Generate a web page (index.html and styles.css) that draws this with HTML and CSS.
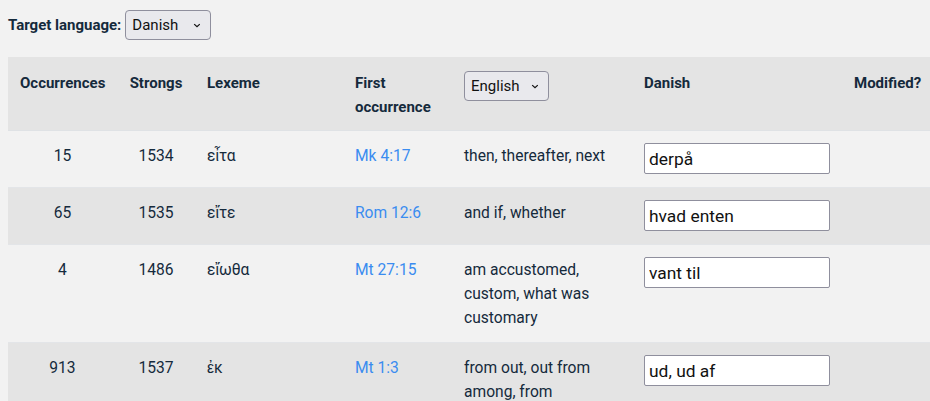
FILE: index.html
```html
<!DOCTYPE html>
<html lang="en">
<head>
<meta charset="utf-8">
<title>Lexeme translations</title>
<link rel="stylesheet" href="styles.css">
</head>
<body>
<div class="lang-bar">
  <label class="lang-label" for="target">Target language:</label>
  <select id="target" class="picker picker-target"><option>Danish</option></select>
</div>
<div class="table-wrap">
<table class="lex-table">
  <colgroup>
    <col class="c-occ"><col class="c-str"><col class="c-lex"><col class="c-first"><col class="c-gloss"><col class="c-tr"><col class="c-mod">
  </colgroup>
  <thead>
    <tr>
      <th class="num">Occurrences</th>
      <th class="num">Strongs</th>
      <th>Lexeme</th>
      <th>First occurrence</th>
      <th><select class="picker picker-src"><option>English</option></select></th>
      <th>Danish</th>
      <th>Modified?</th>
    </tr>
  </thead>
  <tbody>
    <tr>
      <td class="num">15</td><td class="num">1534</td><td>εἶτα</td>
      <td><a href="#">Mk 4:17</a></td><td>then, thereafter, next</td>
      <td><input class="tr-input" type="text" value="derpå"></td><td></td>
    </tr>
    <tr class="alt">
      <td class="num">65</td><td class="num">1535</td><td>εἴτε</td>
      <td><a href="#">Rom 12:6</a></td><td>and if, whether</td>
      <td><input class="tr-input" type="text" value="hvad enten"></td><td></td>
    </tr>
    <tr>
      <td class="num">4</td><td class="num">1486</td><td>εἴωθα</td>
      <td><a href="#">Mt 27:15</a></td><td>am accustomed, custom, what was customary</td>
      <td><input class="tr-input" type="text" value="vant til"></td><td></td>
    </tr>
    <tr class="alt">
      <td class="num">913</td><td class="num">1537</td><td>ἐκ</td>
      <td><a href="#">Mt 1:3</a></td><td>from out, out from among, from</td>
      <td><input class="tr-input" type="text" value="ud, ud af"></td><td></td>
    </tr>
  </tbody>
</table>
</div>
</body>
</html>
```
FILE: styles.css
```css
html {
  background: #f2f2f2;
  overflow: hidden;
}
body {
  margin: 8px 0 8px 8px;
  font-family: Roboto, "Liberation Sans", sans-serif;
  font-size: 15.6px;
  line-height: 24px;
  color: #152a3c;
}
.lang-bar {
  display: flex;
  align-items: center;
  gap: 4px;
  height: 34px;
}
.lang-label {
  font-weight: bold;
  font-size: 15px;
}
.picker {
  -webkit-appearance: none;
  appearance: none;
  height: 30px;
  box-sizing: border-box;
  border: 1px solid #8f8f9d;
  border-radius: 4px;
  background-color: #e9e9ed;
  background-image: url("data:image/svg+xml,%3Csvg xmlns='http://www.w3.org/2000/svg' width='10' height='6' viewBox='0 0 10 6'%3E%3Cpath d='M1.5 1.2 L5 4.6 L8.5 1.2' fill='none' stroke='%23111' stroke-width='1.5'/%3E%3C/svg%3E");
  background-repeat: no-repeat;
  background-position: right 9px center;
  background-size: 8px 5px;
  font-family: Roboto, "Liberation Sans", sans-serif;
  font-size: 15px;
  color: #111;
  padding: 0 22px 0 6px;
  margin: 0;
}
.picker-target { width: 86px; }
.picker-src { width: 85px; }
.table-wrap {
  margin-top: 15px;
  background: #e4e4e4;
}
.lex-table {
  width: 100%;
  table-layout: fixed;
  border-collapse: collapse;
}
.c-occ { width: 109px; }
.c-str { width: 78px; }
.c-lex { width: 148px; }
.c-first { width: 109px; }
.c-gloss { width: 180px; }
.c-tr { width: 210px; }
.c-mod { width: auto; }
.lex-table th,
.lex-table td {
  padding: 13px 12px 12px;
  text-align: left;
  vertical-align: top;
}
.lex-table th:last-child,
.lex-table td:last-child {
  padding-right: 0;
}
.lex-table thead tr {
  background: #e4e4e4;
  border-bottom: 1px solid #dfe2e5;
}
.lex-table th {
  font-weight: bold;
  font-size: 15px;
  padding-top: 14px;
  padding-bottom: 11px;
}
.lex-table .num {
  text-align: center;
}
.lex-table tbody tr {
  border-top: 1px solid #e3e5e8;
  background: #f2f2f2;
}
.lex-table tbody tr.alt {
  background: #e4e4e4;
}
.lex-table a {
  color: #3a8cf0;
  text-decoration: none;
}
.tr-input {
  display: block;
  width: 186px;
  height: 31px;
  box-sizing: border-box;
  border: 1px solid #8f8f9d;
  border-radius: 2px;
  background: #fff;
  padding: 0 4px;
  margin: -1px 0 1px;
  font-family: Roboto, "Liberation Sans", sans-serif;
  font-size: 17.4px;
  color: #111;
}
```
